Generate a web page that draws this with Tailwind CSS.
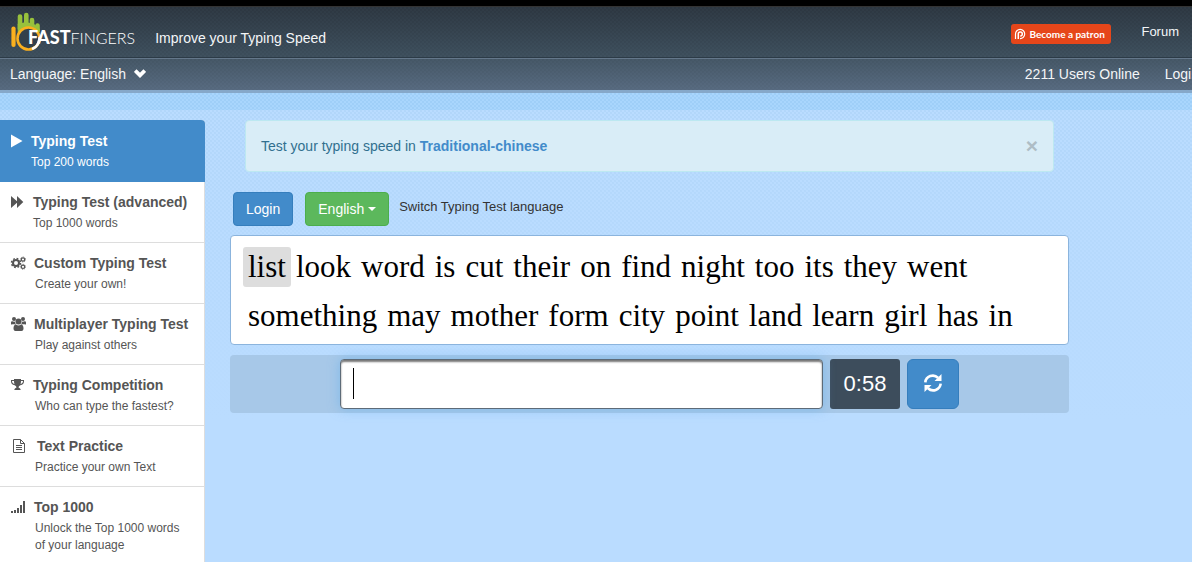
<!DOCTYPE html>
<html lang="en">
<head>
<meta charset="utf-8">
<title>10FastFingers - Typing Test</title>
<script src="https://cdn.jsdelivr.net/npm/@tailwindcss/browser@4"></script>
</head>
<body class="min-h-screen overflow-hidden bg-[#badcff] font-['Liberation_Sans',sans-serif] text-sm text-[#333]">
<div class="min-h-screen bg-[linear-gradient(to_bottom,rgba(186,220,255,0)_90px,#badcff_420px),repeating-conic-gradient(#b1d6fa_0_25%,#badcff_0_50%)] bg-[length:100%_100%,4px_4px]">

  <header class="text-[#f4f6f8]">
    <div class="h-[7px] border-b border-[#333] bg-black"></div>
    <div class="flex h-[51px] items-center justify-between overflow-hidden border-b border-[#2c3b47] bg-[linear-gradient(to_bottom,rgba(44,54,64,.9),rgba(62,80,94,.9)),repeating-conic-gradient(#2c3640_0_25%,#4a5b69_0_50%)] bg-[length:100%_100%,4px_4px]">
      <div class="flex items-center pl-[10px]">
        <a href="#" class="flex items-center" aria-label="10FastFingers">
          <svg class="h-10 w-10 shrink-0" viewBox="0 0 40 40" fill="none" stroke-linecap="round">
            <path d="M10 17V4.500M16.300 14V3M22 15.500V8M27.500 19V13.500" stroke="#98c13c" stroke-width="4.600"/>
            <path d="M7.700 12L16 10L24 12L29.800 17V20L20 16L12 18L7.700 22Z" fill="#98c13c"/>
            <path d="M3.500 16.500V33" stroke="#fbb01e" stroke-width="4.200"/>
            <circle cx="18.500" cy="26.500" r="11" fill="#33404b" stroke="#fbb01e" stroke-width="2.600"/>
            <path d="M29.500 26C29.200 31.500 26.500 35 23 36.500" stroke="#fff" stroke-width="2.600"/>
          </svg>
          <span class="relative -ml-[22px] pt-[10px] font-['Lato',sans-serif] text-base leading-5 text-white"><span class="text-lg leading-5 font-black">FAST</span><span class="font-light">FINGERS</span></span>
        </a>
        <p class="pt-3 pl-5 leading-5">Improve your Typing Speed</p>
      </div>
      <nav class="flex shrink-0 items-center gap-[30px] pt-1 pr-[13px]">
        <a href="#" class="flex h-5 w-[100px] items-center gap-[3px] rounded-[3px] bg-[#e6461a] pl-[3px] font-['Lato',sans-serif] text-[10px] font-bold whitespace-nowrap text-white">
          <svg class="size-3 shrink-0" viewBox="0 0 12 12" fill="none" stroke="#fff"><path d="M1.500 11V6A4.600 4.600 0 1 1 6 10.600" stroke-width="1.200"/><path d="M4.300 11V5.800A2 2 0 1 1 6.200 7.900" stroke-width="1.500"/></svg>
          Become a patron</a>
        <a href="#" class="pb-1 text-[13px]">Forum</a>
      </nav>
    </div>
    <div class="flex h-8 items-center justify-between overflow-hidden border-t border-[#64778a] bg-[linear-gradient(to_bottom,rgba(68,86,101,.9),rgba(88,107,129,.9)),repeating-conic-gradient(#3e4f5c_0_25%,#5d7084_0_50%)] bg-[length:100%_100%,4px_4px] pb-0.5 pl-[10px]">
      <button type="button" class="flex items-center gap-2">Language: English
        <svg class="h-[9px] w-3" viewBox="0 0 12 9" fill="none" stroke="#fff" stroke-width="3.800"><path d="M1.200 1.500L6 6.300L10.800 1.500"/></svg>
      </button>
      <div class="-mr-[7px] flex shrink-0 gap-[25px]"><span>2211 Users Online</span><a href="#">Login</a></div>
    </div>
  </header>
  <div class="h-5 border-t-[3px] border-[#86a8c9] bg-[repeating-conic-gradient(#9fcff8_0_25%,#a9d6fd_0_50%)] bg-[length:4px_4px]"></div>

  <div class="flex items-start pt-[10px]">
    <nav class="w-[205px] shrink-0 rounded-tr border-r border-[#ddd] bg-white text-[#555]">
      <a href="#" class="-mr-px block rounded-tr border-b border-[#428bca] bg-[#428bca] pt-[11px] pb-[10px] pl-[10px] text-white">
        <span class="flex items-center gap-[7px] leading-5 font-bold"><svg class="h-3.5 w-3.5" viewBox="0 0 14 14" fill="currentColor"><path d="M1 .5L12.500 7L1 13.500Z"/></svg>Typing Test</span>
        <span class="mt-[3px] block pl-[21px] text-xs leading-[17px]">Top 200 words</span>
      </a>
      <a href="#" class="block border-b border-[#ddd] pt-[10px] pb-[10px] pl-[10px]">
        <span class="flex items-center gap-[7px] leading-5 font-bold"><svg class="h-3.5 w-4" viewBox="0 0 16 14" fill="currentColor"><path d="M1 1L7 6.300V1L13.300 7L7 13V7.700L1 13Z"/></svg>Typing Test (advanced)</span>
        <span class="mt-[3px] block pl-[23px] text-xs leading-[17px]">Top 1000 words</span>
      </a>
      <a href="#" class="block border-b border-[#ddd] pt-[10px] pb-[10px] pl-[10px]">
        <span class="flex items-center gap-[7px] leading-5 font-bold"><svg class="h-3.5 w-[17px]" viewBox="0 0 17 14" fill="none" stroke="currentColor"><circle cx="6" cy="7" r="3" stroke-width="2"/><circle cx="6" cy="7" r="4.500" stroke-width="1.500" stroke-dasharray="1.770 1.770"/><circle cx="13" cy="3.500" r="1.700" stroke-width="1.200"/><circle cx="13" cy="3.500" r="2.500" stroke-width=".8" stroke-dasharray="1 .96"/><circle cx="13" cy="10.800" r="1.700" stroke-width="1.200"/><circle cx="13" cy="10.800" r="2.500" stroke-width=".8" stroke-dasharray="1 .96"/></svg>Custom Typing Test</span>
        <span class="mt-[3px] block pl-[25px] text-xs leading-[17px]">Create your own!</span>
      </a>
      <a href="#" class="block border-b border-[#ddd] pt-[10px] pb-[10px] pl-[10px]">
        <span class="flex items-center gap-[7px] leading-5 font-bold"><svg class="h-3.5 w-[17px]" viewBox="0 0 17 14" fill="currentColor"><circle cx="4" cy="2" r="2"/><circle cx="13" cy="2" r="2"/><circle cx="8.500" cy="4.500" r="3"/><path d="M1 7V5.500Q1 4 2.300 4.200Q4 5 5 4.500Q5 6.500 6 7.300H2.500Q1 8 1 7ZM16 7V5.500Q16 4 14.700 4.200Q13 5 12 4.500Q12 6.500 11 7.300H14.500Q16 8 16 7ZM3.500 12Q3.400 7.500 6 7.500Q8.500 9.300 11 7.500Q13.600 7.500 13.500 12Q13.300 14 11.500 14H5.500Q3.700 14 3.500 12Z"/></svg>Multiplayer Typing Test</span>
        <span class="mt-[3px] block pl-[25px] text-xs leading-[17px]">Play against others</span>
      </a>
      <a href="#" class="block border-b border-[#ddd] pt-[10px] pb-[10px] pl-[10px]">
        <span class="flex items-center gap-[7px] leading-5 font-bold"><svg class="h-3.5 w-4" viewBox="0 0 16 14" fill="currentColor"><path d="M4 1H11V2H14V3.500Q14 6.500 10.300 7.300Q8.500 8.300 8.500 9.500Q10.500 10 10.800 12H4.200Q4.500 10 6.500 9.500Q6.500 8.300 4.700 7.300Q1 6.500 1 3.500V2H4ZM2 3V3.500Q2 5.300 4.500 6.200Q4 5 4 3ZM13 3H11Q11 5 10.500 6.200Q13 5.300 13 3.500Z" fill-rule="evenodd"/></svg>Typing Competition</span>
        <span class="mt-[3px] block pl-[25px] text-xs leading-[17px]">Who can type the fastest?</span>
      </a>
      <a href="#" class="block border-b border-[#ddd] pt-[10px] pb-[10px] pl-[10px]">
        <span class="flex items-center gap-[7px] leading-5 font-bold"><svg class="h-3.5 w-5" viewBox="0 0 20 14" fill="none" stroke="currentColor"><path d="M3.500 .5H10.500L14.500 4.500V13.500H3.500ZM10.500 .5V4.500H14.500M6 6.500H12M6 8.500H12M6 10.500H12"/></svg>Text Practice</span>
        <span class="mt-[3px] block pl-[25px] text-xs leading-[17px]">Practice your own Text</span>
      </a>
      <a href="#" class="block border-b border-[#ddd] pt-[10px] pb-[10px] pl-[10px]">
        <span class="flex items-center gap-[7px] leading-5 font-bold"><svg class="h-3.5 w-[17px]" viewBox="0 0 17 14" fill="currentColor"><path d="M1 11H3V13H1ZM4 10H6V13H4ZM7 8H9V13H7ZM10 5H12V13H10ZM13 1H15V13H13Z"/></svg>Top 1000</span>
        <span class="mt-[3px] block pr-5 pl-[25px] text-xs leading-[17px]">Unlock the Top 1000 words of your language</span>
      </a>
    </nav>

    <main class="ml-[25px] w-full max-w-[839px]">
      <div class="mx-[15px] flex items-center justify-between rounded border border-[#bce8f1] bg-[#d9edf7] p-[15px] leading-5 text-[#31708f]">
        <p>Test your typing speed in <a href="#" class="font-bold text-[#428bca]">Traditional-chinese</a></p>
        <button type="button" aria-label="Close" class="text-[21px] leading-5 font-bold text-[#aebdc5]">×</button>
      </div>

      <div class="mt-5 flex items-center pl-[3px]">
        <button type="button" class="h-[34px] rounded border border-[#357ebd] bg-[#428bca] px-3 text-white">Login</button>
        <button type="button" class="ml-3 flex h-[34px] items-center gap-1 rounded border border-[#4cae4c] bg-[#5cb85c] px-3 text-white">English <svg class="h-1 w-2" viewBox="0 0 8 4" fill="#fff"><path d="M0 0H8L4 4Z"/></svg></button>
        <span class="ml-[10px] pb-[3px] text-[13px]">Switch Typing Test language</span>
      </div>

      <div class="mt-[9px] rounded border border-[#8bb4dd] bg-white px-3 py-[11px] font-['Liberation_Serif',serif] text-[31px] leading-10 text-black">
        <div class="flex">
          <span class="rounded-[3px] bg-[#ddd] px-[5px]">list</span><span class="px-[5px]">look</span><span class="px-[5px]">word</span><span class="px-[5px]">is</span><span class="px-[5px]">cut</span><span class="px-[5px]">their</span><span class="px-[5px]">on</span><span class="px-[5px]">find</span><span class="px-[5px]">night</span><span class="px-[5px]">too</span><span class="px-[5px]">its</span><span class="px-[5px]">they</span><span class="px-[5px]">went</span>
        </div>
        <div class="mt-[9px] -mb-[3px] flex">
          <span class="px-[5px]">something</span><span class="px-[5px]">may</span><span class="px-[5px]">mother</span><span class="px-[5px]">form</span><span class="px-[5px]">city</span><span class="px-[5px]">point</span><span class="px-[5px]">land</span><span class="px-[5px]">learn</span><span class="px-[5px]">girl</span><span class="px-[5px]">has</span><span class="px-[5px]">in</span>
        </div>
      </div>

      <div class="mt-[10px] rounded bg-[#a7c8e8] py-1">
        <div class="mx-auto flex h-[50px] max-w-[619px] gap-[7px]">
          <div class="relative flex-1">
            <input type="text" aria-label="Type the words" class="h-full w-full rounded border border-[#5d6b78] bg-white px-3 text-[26px] shadow-[inset_0_2px_2px_#777,0_0_12px_rgba(102,175,233,.6)] outline-none">
            <span class="absolute top-[9px] left-[13px] h-[31px] w-px bg-black"></span>
          </div>
          <div class="flex w-[70px] items-center justify-center rounded-[3px] bg-[#3d4d5c] text-[22px] text-white">0:58</div>
          <button type="button" aria-label="Restart" class="flex w-[52px] items-center justify-center rounded-md border border-[#357ebd] bg-[#428bca] pb-0.5">
            <svg class="h-[18px] w-[18px]" viewBox="0 0 18 18" fill="none" stroke="#fff" stroke-width="2.600"><path d="M1.300 8.300A7.500 7.500 0 0 1 14 3.800M16.700 9.700A7.500 7.500 0 0 1 4 14.200"/><path d="M17.500 0V7H10.500ZM.5 18V11H7.500Z" fill="#fff" stroke="none"/></svg>
          </button>
        </div>
      </div>
    </main>
  </div>
</div>
</body>
</html>
